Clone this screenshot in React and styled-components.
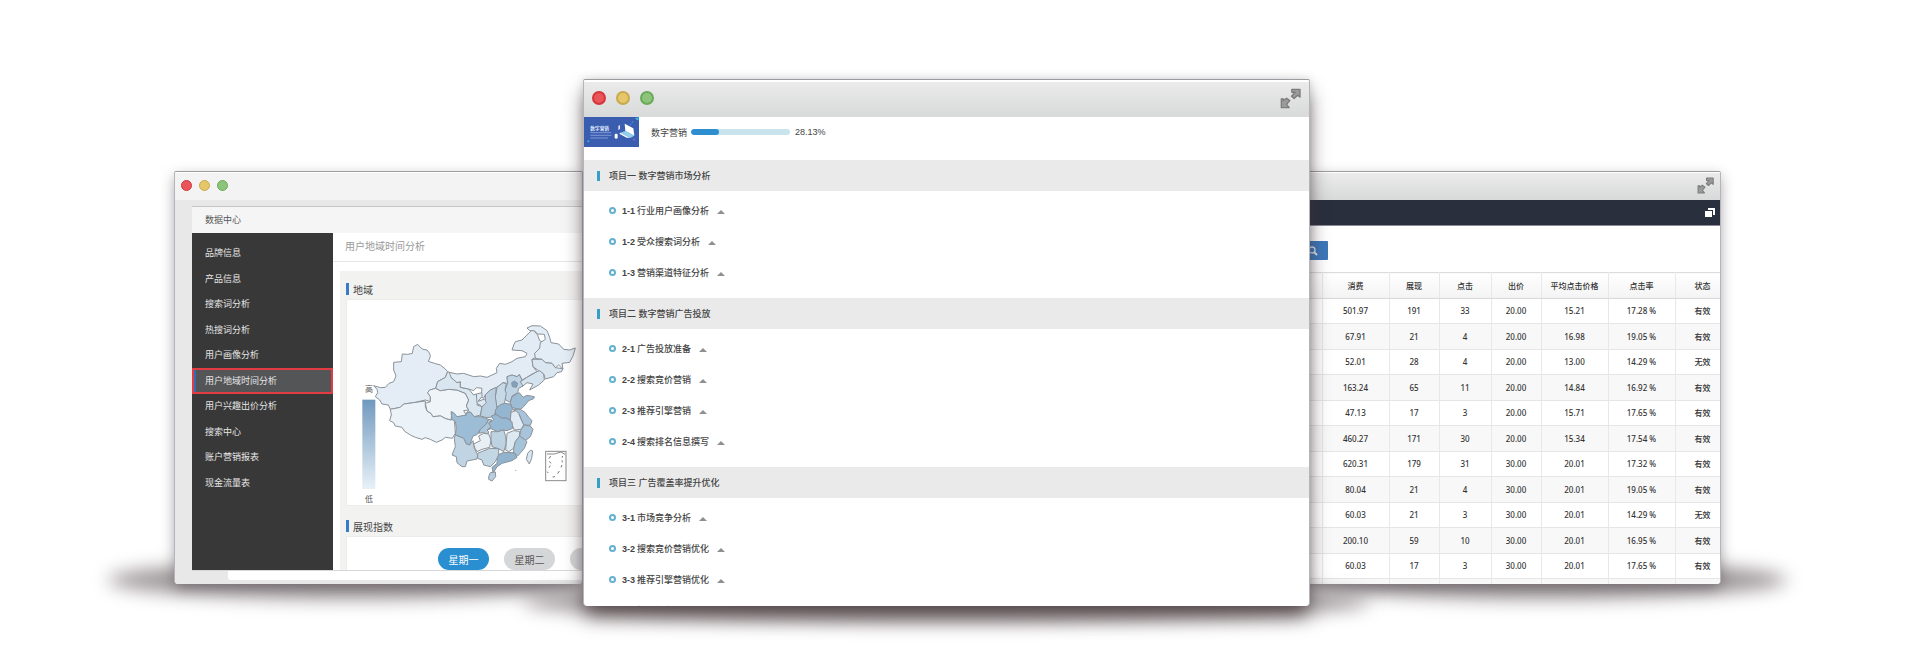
import React, { useState } from "react";
import styled, { createGlobalStyle } from "styled-components";

const GlobalStyle = createGlobalStyle`
    *,
    *::before {
        box-sizing: border-box;
    }

    body {
        margin: 0;
        background-color: #fff;
        font-family: "Liberation Sans", "Noto Sans CJK SC", sans-serif;
        font-size: 9px;
        color: #444;
    }

    button {
        font-family: inherit;
        cursor: pointer;
    }
`;

const Stage = styled.main`
    display: grid;
    grid-template-columns: 409fr 727fr 411fr;
    height: 100vh;
    padding: 79px 193px 66px 174px;
    overflow: hidden;
`;

const Frame = styled.section`
    position: relative;
    display: flex;
    min-width: 0;
    min-height: 0;
    z-index: ${({ $front }) => ($front ? 2 : 1)};
    margin: ${({ $front }) => ($front ? "0" : "92px 0 22px")};
    margin-left: ${({ $tucked }) => ($tucked ? "-20px" : "0")};
`;

/* soft pool of shadow below each window */
const Pool = styled.div`
    position: absolute;
    bottom: -15px;
    left: ${({ $left }) => $left};
    right: ${({ $right }) => $right};
    height: 38px;
    border-radius: 50%;
    background-color: rgba(90, 78, 82, 0.6);
    filter: blur(9px);
`;

const Window = styled.div`
    position: relative;
    flex: 1;
    display: flex;
    flex-direction: column;
    min-width: 0;
    min-height: 0;
    padding-top: ${({ $front }) => ($front ? "2px" : "1px")};
    border: 1px solid #b4b4bc;
    border-top-color: #9b9ba0;
    border-bottom: none;
    border-radius: 2px 2px 4px 4px;
    background-color: #fff;
    overflow: hidden;
    box-shadow: ${({ $front }) =>
        $front
            ? "0 12px 20px -2px rgba(60, 46, 48, 0.75), 0 0 8px rgba(80, 80, 90, 0.2)"
            : "0 5px 14px -1px rgba(70, 60, 68, 0.5)"};
`;

const TitleBar = styled.header`
    display: flex;
    flex-shrink: 0;
    align-items: center;
    justify-content: space-between;
    height: ${({ $large }) => ($large ? "35px" : "27px")};
    padding: ${({ $large }) => ($large ? "0 8px 3px" : "0 6px 2px")};
    background: ${({ $flat }) => ($flat ? "#f3f3f3" : "linear-gradient(#ebebeb, #d8d9d9)")};
`;

const Lights = styled.div`
    display: flex;
    gap: ${({ $large }) => ($large ? "10px" : "7px")};
`;

const Light = styled.span`
    width: ${({ $large }) => ($large ? "14px" : "11px")};
    height: ${({ $large }) => ($large ? "14px" : "11px")};
    border: ${({ $large }) => ($large ? "2px" : "1px")} solid ${({ $edge }) => $edge};
    border-radius: 50%;
    background-color: ${({ $fill }) => $fill};
`;

const IconButton = styled.button`
    display: flex;
    margin-left: auto;
    padding: 0;
    border: none;
    background: none;
`;

/* left window */

const DataBody = styled.div`
    flex: 1;
    display: flex;
    flex-direction: column;
    min-height: 0;
    padding: 6px 0 4px 17px;
    background-color: #e8e8e9;
`;

const DataPanel = styled.div`
    flex: 1;
    display: flex;
    flex-direction: column;
    min-height: 0;
    overflow: hidden;
    border-top: 1px solid #c6c6c8;
    border-bottom: 1px solid #d8d8da;
    background-color: #fff;
`;

const PanelTitle = styled.div`
    flex-shrink: 0;
    padding-left: 13px;
    line-height: 26px;
    background-color: #f5f5f5;
    color: #555;
`;

const Columns = styled.div`
    flex: 1;
    display: flex;
    min-height: 0;
`;

const Menu = styled.nav`
    flex: 0 0 141px;
    display: flex;
    flex-direction: column;
    padding-top: 7px;
    background-color: #383838;
`;

const MenuLink = styled.a`
    display: block;
    height: 26px;
    margin-bottom: ${({ $tight }) => ($tight ? "-1px" : "0")};
    padding-left: ${({ $active }) => ($active ? "11px" : "13px")};
    border: ${({ $active }) => ($active ? "2px solid #e23b41" : "none")};
    box-shadow: ${({ $active }) => ($active ? "inset 2px 0 #2f6fb5" : "none")};
    background-color: ${({ $active }) => ($active ? "#545557" : "transparent")};
    line-height: ${({ $active }) => ($active ? "22px" : "26px")};
    color: #e6e6e6;
    text-decoration: none;
`;

const Report = styled.div`
    flex: 1;
    min-width: 0;
    overflow: hidden;
    font-size: 10px;
`;

const ReportTitle = styled.div`
    padding-left: 12px;
    border-bottom: 1px solid #e6e6e6;
    line-height: 28px;
    color: #9a9a9a;
`;

const ReportBody = styled.div`
    margin: 9px 0 0 7px;
    padding: 8px 0 0 6px;
    background-color: #f2f2f1;
`;

const CardTitle = styled.h3`
    display: flex;
    align-items: center;
    gap: 4px;
    height: 20px;
    margin: 0;
    font-size: 10px;
    font-weight: 400;

    &::before {
        content: "";
        width: 3px;
        height: 12px;
        background-color: #3a7bc8;
    }
`;

const Card = styled.div`
    height: ${({ $height }) => $height};
    margin-bottom: 10px;
    border: 1px solid #ececec;
    border-right: none;
    background-color: #fff;
    overflow: hidden;

    svg {
        display: block;
    }
`;

const Days = styled.div`
    display: flex;
    gap: 15px;
    padding: 11px 0 0 91px;
`;

const Day = styled.button`
    flex: 0 0 51px;
    height: 22px;
    padding: 0;
    border: none;
    border-radius: 11px;
    background-color: ${({ $active }) => ($active ? "#2a8fd0" : "#d5d6d8")};
    color: ${({ $active }) => ($active ? "#fff" : "#555")};
    font-size: 10px;
`;

const Strip = styled.div`
    flex-shrink: 0;
    height: 9px;
    margin-left: 36px;
    border-bottom-left-radius: 3px;
    background-color: #fff;
`;

/* centre window */

const Course = styled.div`
    flex: 1;
    min-height: 0;
    overflow: hidden;
`;

const CourseHead = styled.div`
    display: flex;
    align-items: center;
    height: 30px;
    margin-bottom: 13px;
`;

const Thumb = styled.svg`
    flex-shrink: 0;
    width: 55px;
    height: 30px;
    margin-right: 12px;
`;

const Track = styled.div`
    width: 99px;
    height: 6px;
    margin: 0 5px 0 4px;
    border-radius: 3px;
    background-color: #c9e4ec;
    overflow: hidden;
`;

const Fill = styled.div`
    height: 100%;
    border-radius: 3px;
    background-color: #2e8fd0;
`;

const ProjectTitle = styled.h2`
    display: flex;
    align-items: center;
    gap: 9px;
    height: 31px;
    margin: 0;
    padding-left: 13px;
    background-color: #eaeaea;
    font-size: 9px;
    font-weight: 500;

    &::before {
        content: "";
        width: 3px;
        height: 10px;
        background-color: #369fc6;
    }
`;

const Lessons = styled.ul`
    margin: 0;
    padding: 4px 0 10px 25px;
    list-style: none;
`;

const Lesson = styled.button`
    display: flex;
    align-items: center;
    height: 31px;
    padding: 0;
    border: none;
    background: none;
    color: #444;
    font-size: 9px;
    font-weight: 500;

    &::before {
        content: "";
        width: 7px;
        height: 7px;
        margin-right: 6px;
        border: 2px solid #63b0d0;
        border-radius: 50%;
    }

    &::after {
        content: "";
        margin: 2px 0 0 8px;
        border: 4px solid transparent;
        border-top: none;
        border-bottom-color: #8f8f8f;
    }
`;

const LessonNo = styled.span`
    margin-right: 2px;
    font-weight: 700;
`;

/* right window */

const NavBar = styled.div`
    display: flex;
    flex-shrink: 0;
    align-items: center;
    height: 26px;
    padding-right: 5px;
    border-bottom: 1px solid #8d8a98;
    background-color: #2a2f3e;
`;

const SearchArea = styled.div`
    flex-shrink: 0;
    padding: 15px 0 12px 7px;
`;

const SearchButton = styled.button`
    display: flex;
    align-items: center;
    justify-content: center;
    width: 30px;
    height: 19px;
    padding: 0;
    border: none;
    border-radius: 1px;
    background-color: #3c78ba;
`;

const TableArea = styled.div`
    flex: 1;
    min-height: 0;
    margin-right: -10px;
    overflow: hidden;
`;

const Table = styled.table`
    width: 100%;
    table-layout: fixed;
    border-collapse: collapse;
    font-family: "Noto Sans", "Noto Sans CJK SC", sans-serif;
    font-size: 8px;
    line-height: 12px;
    color: #333;
    text-align: center;

    th,
    td {
        padding: 0;
        border-right: 1px solid #e8e8e8;
        border-bottom: 1px solid #e6e6e6;
    }

    th {
        height: 26px;
        border-top: 1px solid #dcdcdc;
        border-bottom-color: #d8d8d8;
        background: linear-gradient(#fff, #f3f3f3);
        font-weight: 500;
    }

    td {
        height: 25px;
        font-weight: 500;
    }

    tbody tr:nth-child(even) td {
        height: 26px;
        background-color: #f8f8f8;
    }
`;

const menu = [
    "品牌信息",
    "产品信息",
    "搜索词分析",
    "热搜词分析",
    "用户画像分析",
    "用户地域时间分析",
    "用户兴趣出价分析",
    "搜索中心",
    "账户营销报表",
    "现金流量表",
];

const projects = [
    {
        title: "项目一 数字营销市场分析",
        lessons: [["1-1", "行业用户画像分析"], ["1-2", "受众搜索词分析"], ["1-3", "营销渠道特征分析"]],
    },
    {
        title: "项目二 数字营销广告投放",
        lessons: [["2-1", "广告投放准备"], ["2-2", "搜索竞价营销"], ["2-3", "推荐引擎营销"], ["2-4", "搜索排名信息撰写"]],
    },
    {
        title: "项目三 广告覆盖率提升优化",
        lessons: [["3-1", "市场竞争分析"], ["3-2", "搜索竞价营销优化"], ["3-3", "推荐引擎营销优化"], ["3-4", "搜索排名优化"]],
    },
];

const columns = [
    ["", 31],
    ["消费", 67],
    ["展现", 50],
    ["点击", 52],
    ["出价", 50],
    ["平均点击价格", 67],
    ["点击率", 67],
    ["状态", 55],
];

const rows = [
    ["501.97", "191", "33", "20.00", "15.21", "17.28 %", "有效"],
    ["67.91", "21", "4", "20.00", "16.98", "19.05 %", "有效"],
    ["52.01", "28", "4", "20.00", "13.00", "14.29 %", "无效"],
    ["163.24", "65", "11", "20.00", "14.84", "16.92 %", "有效"],
    ["47.13", "17", "3", "20.00", "15.71", "17.65 %", "有效"],
    ["460.27", "171", "30", "20.00", "15.34", "17.54 %", "有效"],
    ["620.31", "179", "31", "30.00", "20.01", "17.32 %", "有效"],
    ["80.04", "21", "4", "30.00", "20.01", "19.05 %", "有效"],
    ["60.03", "21", "3", "30.00", "20.01", "14.29 %", "无效"],
    ["200.10", "59", "10", "30.00", "20.01", "16.95 %", "有效"],
    ["60.03", "17", "3", "30.00", "20.01", "17.65 %", "有效"],
    ["", "", "", "", "", "", ""],
];

const provinces = [
    ["#e4edf5", "M130 257 L150 263 L165 262 L176 250 L190 245 L197 228 L190 210 L190 187 L213 185 L216 162 L232 163 L246 160 L250 140 L262 133 L270 142 L278 148 L290 150 L298 160 L300 170 L294 184 L312 190 L330 195 L345 207 L352 215 L345 232 L322 245 L316 265 L298 270 L292 278 L300 290 L300 305 L285 300 L250 308 L220 312 L210 322 L180 328 L174 315 L155 312 L148 300 L135 290 L142 278 L140 268Z"],
    ["#ebf2f8", "M180 328 L210 322 L220 312 L250 308 L285 303 L285 320 L290 333 L302 340 L308 350 L330 347 L345 355 L362 360 L372 355 L375 400 L366 415 L345 412 L335 420 L318 427 L300 418 L285 413 L275 418 L255 412 L240 405 L222 393 L215 382 L195 378 L190 368 L178 362 L183 345Z"],
    ["#eff4f9", "M298 270 L316 265 L330 272 L355 268 L380 270 L405 280 L415 300 L408 318 L415 330 L400 332 L408 345 L390 350 L375 350 L365 335 L362 360 L345 355 L330 347 L308 350 L302 340 L290 333 L285 310 L300 305 L300 290 L292 278Z"],
    ["#d9e6f0", "M352 215 L368 222 L362 232 L380 248 L390 245 L390 262 L415 267 L430 285 L438 282 L445 300 L440 315 L455 320 L450 345 L432 350 L420 336 L410 338 L415 330 L408 318 L415 300 L405 280 L380 270 L355 268 L330 272 L316 265 L322 245 L345 232Z"],
    ["#e3ecf4", "M357 217 L380 222 L400 220 L430 230 L450 228 L470 232 L500 218 L498 205 L508 190 L525 193 L545 185 L560 175 L585 170 L590 160 L575 152 L545 150 L550 135 L555 125 L575 120 L590 105 L603 92 L608 90 L622 105 L628 122 L640 127 L625 148 L613 160 L618 172 L605 178 L608 200 L620 215 L600 225 L590 232 L575 240 L567 224 L560 230 L545 225 L530 230 L532 250 L518 248 L500 262 L480 270 L465 284 L460 295 L452 290 L455 265 L438 263 L430 272 L415 267 L390 262 L390 245 L380 248 L362 232Z"],
    ["#e3edf5", "M590 84 L605 77 L630 78 L650 92 L658 112 L662 128 L685 132 L700 148 L718 150 L735 144 L728 168 L718 187 L695 190 L698 208 L685 195 L675 203 L665 190 L645 188 L635 178 L615 175 L613 160 L628 145 L630 128 L645 118 L642 103 L622 102 L612 92 L598 92Z"],
    ["#dae7f1", "M605 178 L620 178 L635 178 L645 188 L665 190 L675 203 L697 206 L694 215 L680 218 L670 230 L645 237 L640 222 L625 212 L608 200Z"],
    ["#d4e3ee", "M620 215 L628 212 L640 222 L642 240 L625 255 L598 270 L608 252 L590 248 L575 260 L570 245 L590 232Z"],
    ["#bfd4e4", "M530 230 L545 225 L560 230 L567 224 L575 240 L570 245 L578 258 L565 265 L562 278 L545 288 L540 307 L526 300 L524 270 L532 250Z"],
    ["#7ea3c2", "M544 248 L552 243 L562 250 L558 262 L546 260Z"],
    ["#c7d9e7", "M500 262 L518 248 L528 252 L524 270 L528 280 L522 312 L498 322 L495 290Z"],
    ["#b9cfe0", "M455 320 L465 300 L465 284 L480 270 L498 262 L495 290 L500 325 L490 350 L470 353 L450 348Z"],
    ["#dbe7f1", "M438 282 L455 278 L455 290 L443 304 L463 297 L468 308 L455 320 L440 310Z"],
    ["#9dbdd7", "M545 290 L567 278 L578 292 L590 286 L612 290 L610 296 L595 302 L578 322 L570 328 L545 323 L540 308Z"],
    ["#93b5d0", "M495 330 L508 315 L522 310 L540 312 L547 328 L542 335 L540 360 L528 354 L515 355 L495 342Z"],
    ["#a9c4da", "M547 328 L570 328 L585 338 L595 352 L605 362 L600 376 L580 375 L572 355 L565 340Z"],
    ["#e1ebf3", "M542 337 L557 332 L565 340 L572 358 L580 375 L572 388 L552 390 L545 375 L540 360Z"],
    ["#98b9d4", "M475 370 L490 360 L483 348 L497 343 L515 355 L528 354 L545 365 L547 385 L530 392 L515 390 L502 395 L482 386 L470 390Z"],
    ["#9dbdd6", "M362 335 L372 340 L380 350 L408 345 L408 338 L420 336 L432 350 L450 350 L475 358 L468 372 L450 388 L440 404 L428 408 L418 435 L408 432 L400 415 L375 405 L378 385 L375 365 L365 358Z"],
    ["#adc7da", "M475 358 L468 372 L450 388 L445 400 L460 397 L472 405 L475 395 L470 390 L482 380 L475 370 L485 360Z"],
    ["#c0d4e4", "M375 405 L400 415 L408 432 L418 435 L428 422 L432 445 L442 465 L440 477 L410 483 L405 500 L395 500 L380 488 L378 470 L365 465 L375 440 L372 415Z"],
    ["#e8f0f6", "M430 432 L450 422 L445 408 L460 400 L475 402 L482 420 L478 442 L455 448 L440 455 L434 445Z"],
    ["#bed3e2", "M482 395 L502 395 L520 390 L526 410 L528 430 L520 455 L505 446 L485 440 L482 420Z"],
    ["#dde9f1", "M530 400 L550 392 L568 394 L568 408 L555 425 L550 445 L535 455 L526 450 L528 425Z"],
    ["#a7c4da", "M572 388 L582 375 L600 378 L608 388 L600 410 L585 422 L568 408Z"],
    ["#a5c3d9", "M568 408 L585 420 L590 425 L582 445 L562 468 L550 458 L550 445 L555 425Z"],
    ["#92b3ce", "M502 465 L520 457 L552 458 L560 472 L545 482 L515 490 L500 500 L488 520 L485 502 L500 490Z"],
    ["#c3d6e4", "M442 460 L478 445 L505 446 L505 465 L495 485 L480 500 L460 495 L455 480 L442 475Z"],
    ["#b7cfe1", "M475 530 L480 518 L495 516 L496 530 L485 543 L475 538Z"],
    ["#d9e6f0", "M600 451 L607 453 L604 475 L597 492 L588 478 L592 460Z"],
];

function ExpandIcon({ size }) {
    return (
        <svg width={size} height={size} viewBox="0 0 64 64">
            <g fill="#9a9a9a" stroke="#7c7c7c" strokeWidth="4" strokeLinejoin="round">
                <path d="M36 4 H61 V28 L54 22 L43 32 L35 25 L46 13 H36Z" />
                <path d="M4 33 H10 V38 L20 31 L30 38 L20 50 L28 60 H4Z" />
            </g>
        </svg>
    );
}

function TrafficLights({ large }) {
    return (
        <Lights $large={large}>
            <Light $large={large} $edge="#d2353b" $fill="#ea5559" />
            <Light $large={large} $edge="#c8a94c" $fill="#e5c76a" />
            <Light $large={large} $edge="#69ab58" $fill="#8cc47c" />
        </Lights>
    );
}

function RegionMap() {
    return (
        <svg width="237" height="206" viewBox="50 0 711 618">
            <defs>
                <linearGradient id="scale" x1="0" y1="0" x2="0" y2="1">
                    <stop offset="0" stopColor="#7099be" />
                    <stop offset="1" stopColor="#e8f1f8" />
                </linearGradient>
            </defs>
            <rect x="96" y="299" width="39" height="268" fill="url(#scale)" />
            <g stroke="#8b9299" strokeWidth="3" strokeLinejoin="round">
                {provinces.map(([fill, d]) => (
                    <path key={d} d={d} fill={fill} />
                ))}
            </g>
            <rect x="646" y="454" width="61" height="88" fill="#fff" stroke="#8b8b8b" strokeWidth="3" />
            <path d="M650 462 L672 462 L692 456 L704 463" fill="none" stroke="#8b8b8b" strokeWidth="3" />
            <path d="M661 468 L656 476 M657 484 L662 490 M660 497 L656 503 M650 515 L654 519 M667 531 L674 530 M682 521 L687 513 M692 502 L695 495 M696 487 L695 481 M695 473 L697 468" stroke="#777" strokeWidth="3" />
            <circle cx="556" cy="511" r="2" fill="#aaa" />
            <g fontSize="24" fill="#555">
                <text x="104" y="275">高</text>
                <text x="104" y="605">低</text>
            </g>
        </svg>
    );
}

function DataWindow() {
    const [day, setDay] = useState("星期一");

    return (
        <Frame>
            <Pool $left="-66px" $right="-10px" />
            <Window>
                <TitleBar $flat>
                    <TrafficLights />
                </TitleBar>
                <DataBody>
                    <DataPanel>
                        <PanelTitle>数据中心</PanelTitle>
                        <Columns>
                            <Menu>
                                {menu.map((item, i) => (
                                    <MenuLink key={item} href="#" $active={i === 5} $tight={i % 2 === 1}>
                                        {item}
                                    </MenuLink>
                                ))}
                            </Menu>
                            <Report>
                                <ReportTitle>用户地域时间分析</ReportTitle>
                                <ReportBody>
                                    <CardTitle>地域</CardTitle>
                                    <Card $height="207px">
                                        <RegionMap />
                                    </Card>
                                    <CardTitle>展现指数</CardTitle>
                                    <Card $height="60px">
                                        <Days>
                                            {["星期一", "星期二", ""].map((name) => (
                                                <Day key={name} $active={day === name} onClick={() => setDay(name)}>
                                                    {name}
                                                </Day>
                                            ))}
                                        </Days>
                                    </Card>
                                </ReportBody>
                            </Report>
                        </Columns>
                    </DataPanel>
                    <Strip />
                </DataBody>
            </Window>
        </Frame>
    );
}

function CourseWindow() {
    const progress = 28.13;

    return (
        <Frame $front>
            <Pool $left="-60px" $right="-60px" />
            <Window $front>
                <TitleBar $large>
                    <TrafficLights large />
                    <IconButton aria-label="全屏">
                        <ExpandIcon size={21} />
                    </IconButton>
                </TitleBar>
                <Course>
                    <CourseHead>
                        <Thumb viewBox="0 0 165 90">
                            <rect width="165" height="90" fill="#3b5db0" />
                            <text x="19" y="38" fontSize="14" fontWeight="700" fill="#dfe7fa">数字营销</text>
                            <path d="M19 47 H82 M19 55 H82 M19 63 H72" stroke="#7f97d3" strokeWidth="3" />
                            <path d="M122 20 L148 34 L151 56 L124 42Z" fill="#fff" />
                            <path d="M109 47 L124 42 L151 56 L138 63Z" fill="#8fd0ee" />
                            <path d="M109 47 L138 63 L128 62 L106 50Z" fill="#fff" />
                            <path d="M103 27 L108 24 V36 L103 39Z" fill="#dfe7fa" />
                            <rect x="92" y="50" width="9" height="15" rx="4" fill="#fff" />
                            <path d="M154 3 L164 1 V9 L157 9Z" fill="#36b4e6" />
                            <circle cx="13" cy="73" r="3" fill="#36b4e6" />
                            <circle cx="145" cy="15" r="2" fill="#36b4e6" />
                            <circle cx="140" cy="22" r="2" fill="#36b4e6" />
                            <circle cx="150" cy="68" r="4" fill="#5a6ec0" />
                        </Thumb>
                        <span>数字营销</span>
                        <Track role="progressbar" aria-label="数字营销" aria-valuenow={progress}>
                            <Fill style={{ width: progress + "%" }} />
                        </Track>
                        <span>{progress}%</span>
                    </CourseHead>
                    {projects.map((project) => (
                        <div key={project.title}>
                            <ProjectTitle>{project.title}</ProjectTitle>
                            <Lessons>
                                {project.lessons.map(([no, name]) => (
                                    <li key={no}>
                                        <Lesson>
                                            <LessonNo>{no}</LessonNo>
                                            {name}
                                        </Lesson>
                                    </li>
                                ))}
                            </Lessons>
                        </div>
                    ))}
                </Course>
            </Window>
        </Frame>
    );
}

function ReportWindow() {
    return (
        <Frame $tucked>
            <Pool $left="10px" $right="-66px" />
            <Window>
                <TitleBar>
                    <IconButton aria-label="全屏">
                        <ExpandIcon size={17} />
                    </IconButton>
                </TitleBar>
                <NavBar>
                    <IconButton aria-label="窗口">
                        <svg width="10" height="10" viewBox="0 0 10 10" fill="#fff">
                            <path d="M3 0 H10 V7 H8 V2 H3Z" />
                            <rect y="3" width="7" height="6" />
                        </svg>
                    </IconButton>
                </NavBar>
                <SearchArea>
                    <SearchButton aria-label="搜索">
                        <svg width="10" height="10" viewBox="0 0 10 10" fill="none" stroke="#dfe8f2">
                            <circle cx="4" cy="4" r="3" strokeWidth="1.3" />
                            <path d="M6 6 L9 9" strokeWidth="1.8" />
                        </svg>
                    </SearchButton>
                </SearchArea>
                <TableArea>
                    <Table>
                        <colgroup>
                            {columns.map(([name, width]) => (
                                <col key={name} width={width} />
                            ))}
                        </colgroup>
                        <thead>
                            <tr>
                                {columns.map(([name]) => (
                                    <th key={name}>{name}</th>
                                ))}
                            </tr>
                        </thead>
                        <tbody>
                            {rows.map((row, i) => (
                                <tr key={i}>
                                    <td />
                                    {row.map((cell, j) => (
                                        <td key={j}>{cell}</td>
                                    ))}
                                </tr>
                            ))}
                        </tbody>
                    </Table>
                </TableArea>
            </Window>
        </Frame>
    );
}

const App = () => {
    return (
        <>
            <GlobalStyle />
            <Stage>
                <DataWindow />
                <CourseWindow />
                <ReportWindow />
            </Stage>
        </>
    );
};

export default App;
